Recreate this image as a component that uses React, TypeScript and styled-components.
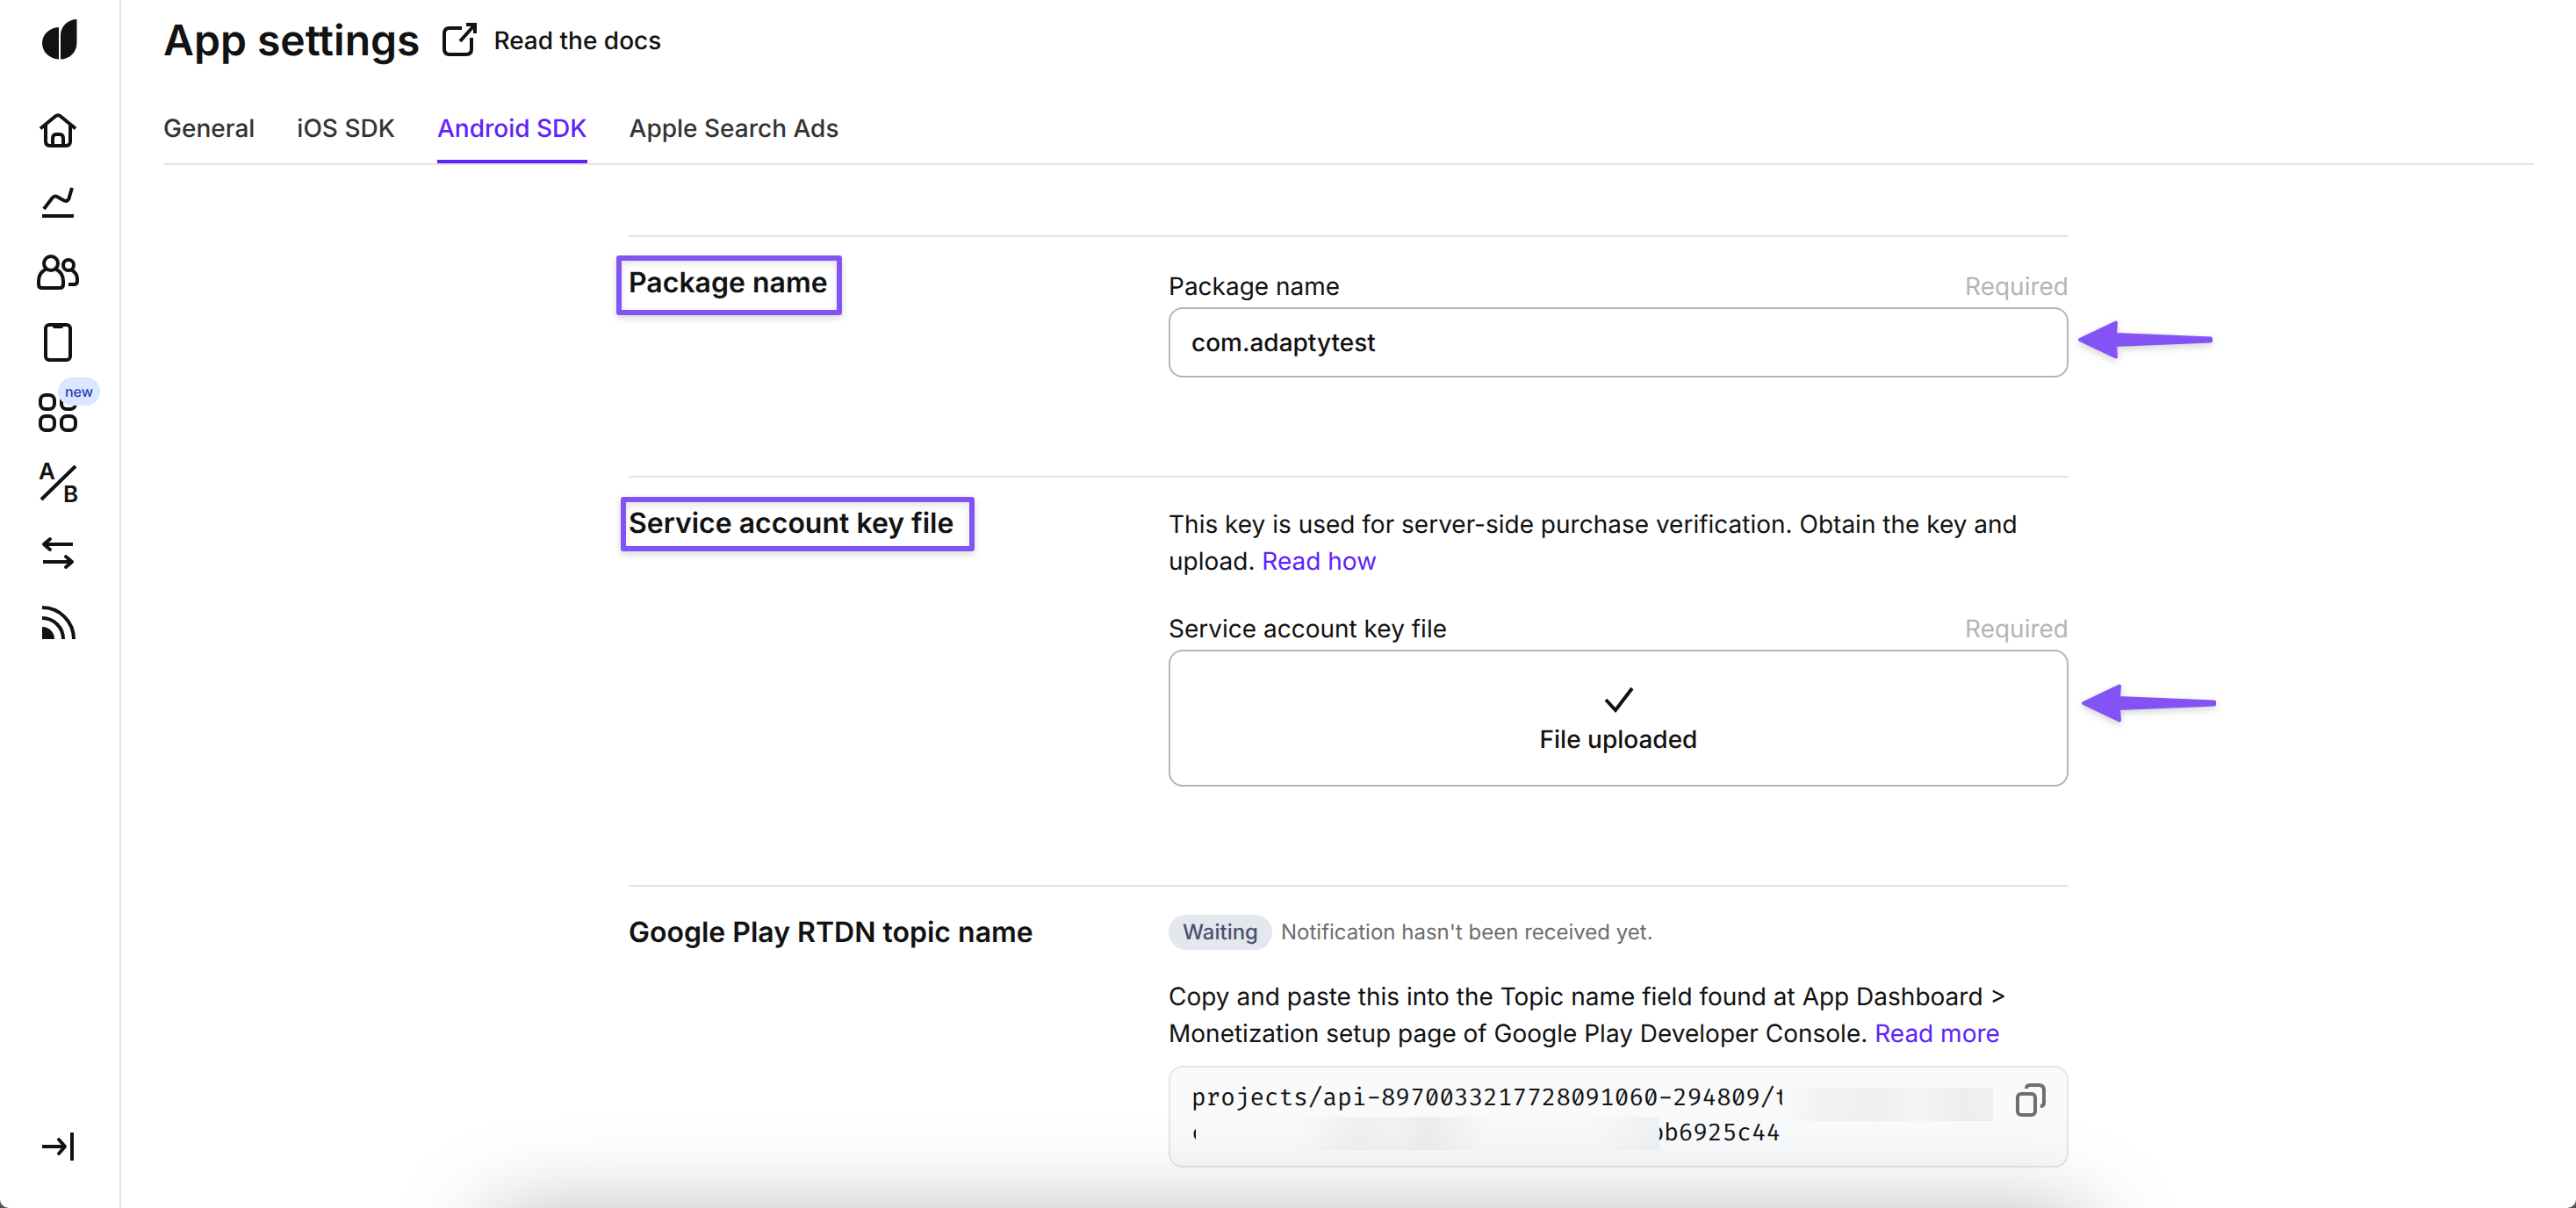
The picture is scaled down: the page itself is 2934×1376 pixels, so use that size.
import React from "react";
import styled, { createGlobalStyle, css } from "styled-components";

const ink = "#121212";
const violet = "#5f22fa";
const marker = "#8453f5";
const hairline = "#e4e4e4";
const outline = "#b5b5b5";

const GlobalStyle = createGlobalStyle`
  *, *::before, *::after { box-sizing: border-box; }
  html { background: #555; }
  body {
    margin: 0;
    color: ${ink};
    font-family: Inter, "Liberation Sans", sans-serif;
    font-size: 28px;
    line-height: 42px;
    text-rendering: geometricPrecision;
  }
  h1, h2, p { margin: 0; }
  button, input { font: inherit; color: inherit; text-rendering: inherit; }
  a { color: inherit; text-decoration: none; }
`;

const Shell = styled.div`
  position: relative;
  display: flex;
  min-height: 100vh;
  overflow: hidden;
  background: #fff;
  border-radius: 0 0 10px 10px;
`;

const Sidebar = styled.aside`
  display: flex;
  flex: none;
  flex-direction: column;
  justify-content: space-between;
  width: 138px;
  padding: 22px 0 46px 42px;
  border-right: 2px solid ${hairline};
`;

const SideNav = styled.nav`
  display: flex;
  flex-direction: column;
  gap: 32px;
  margin-top: 56px;
`;

const iconBox = css`
  position: relative;
  display: block;
  width: 48px;
  height: 48px;
`;

const SideLink = styled.a`
  ${iconBox}
`;

const SideButton = styled.button`
  ${iconBox}
  padding: 0;
  border: 0;
  background: none;
  cursor: pointer;
`;

const NewBadge = styled.span`
  position: absolute;
  top: -16px;
  left: 24px;
  width: 48px;
  border-radius: 16px;
  background: #dae8ff;
  color: #2540b8;
  font-size: 16px;
  font-weight: 500;
  line-height: 32px;
  text-align: center;
`;

const Icon = styled.svg`
  display: block;
  width: 48px;
  height: 48px;
  overflow: visible;
  fill: none;
  stroke: currentColor;
  stroke-width: 4px;
`;

const GlyphText = styled.text`
  fill: currentColor;
  stroke: none;
  font-size: 26px;
  font-weight: 600;
`;

const Main = styled.main`
  flex: 1;
  min-width: 0;
  padding: 18px 48px 46px;
`;

const Header = styled.header`
  display: flex;
  align-items: center;
  gap: 22px;
`;

const Title = styled.h1`
  font-size: 48px;
  font-weight: 600;
  line-height: 56px;
`;

const DocsLink = styled.a`
  display: flex;
  align-items: center;
  gap: 14px;
  font-weight: 500;
`;

const Tabs = styled.nav`
  display: flex;
  gap: 48px;
  margin-top: 52px;
  border-bottom: 2px solid ${hairline};
`;

const Tab = styled.a<{ $active?: boolean }>`
  padding-bottom: 16px;
  border-bottom: 4px solid ${(p) => (p.$active ? violet : "transparent")};
  color: ${(p) => (p.$active ? violet : "#333")};
  font-weight: 500;
  line-height: 40px;
`;

const Sections = styled.div`
  max-width: 1640px;
  margin: 80px auto 0;
`;

const Section = styled.section`
  display: grid;
  grid-template-columns: 3fr 5fr;
  padding: 32px 0 112px;
  border-top: 2px solid ${hairline};

  &:last-child {
    padding-bottom: 0;
  }
`;

const SectionTitle = styled.h2`
  position: relative;
  justify-self: start;
  align-self: start;
  font-size: 32px;
  font-weight: 600;
  line-height: 40px;
`;

const Highlight = styled.span<{ $inset: string }>`
  position: absolute;
  inset: ${(p) => p.$inset};
  border: 6px solid ${marker};
  border-radius: 3px;
  box-shadow: 0 3px 8px rgba(0, 0, 0, 0.16), inset 0 3px 8px rgba(0, 0, 0, 0.12);
  pointer-events: none;
`;

const Stack = styled.div`
  display: flex;
  flex-direction: column;
  gap: 32px;
  min-width: 0;
`;

const Field = styled.div`
  display: flex;
  flex-direction: column;
`;

const FieldHead = styled.div`
  display: flex;
  justify-content: space-between;
  padding: 4px 0;
  line-height: 40px;
`;

const Required = styled.span`
  color: ${outline};
`;

const Control = styled.div`
  position: relative;
`;

const TextInput = styled.input`
  display: block;
  width: 100%;
  height: 80px;
  padding: 0 24px;
  border: 2px solid ${outline};
  border-radius: 16px;
  background: #fff;
  font-weight: 500;
  outline: none;
`;

const Upload = styled.label`
  display: flex;
  flex-direction: column;
  align-items: center;
  padding: 30px;
  border: 2px solid ${outline};
  border-radius: 16px;
  font-weight: 500;
  line-height: 44px;
  cursor: pointer;
`;

const FileInput = styled.input`
  position: absolute;
  width: 1px;
  height: 1px;
  opacity: 0;
`;

const Pointer = styled.svg<{ $left: number; $top: number }>`
  position: absolute;
  top: ${(p) => p.$top}px;
  left: calc(100% + ${(p) => p.$left}px);
  width: 154px;
  height: 44px;
  overflow: visible;
  fill: ${marker};
  stroke: ${marker};
  stroke-width: 4px;
  stroke-linejoin: round;
  filter: drop-shadow(0 3px 4px rgba(0, 0, 0, 0.18));
  pointer-events: none;
`;

const TextLink = styled.a`
  color: ${violet};
`;

const Status = styled.div`
  display: flex;
  align-items: center;
  gap: 10px;
  color: #6b6b6b;
  font-size: 24px;
  line-height: 40px;
`;

const Badge = styled.span`
  padding: 0 16px;
  border-radius: 20px;
  background: #e4e7ed;
  color: #4c5270;
  font-weight: 500;
`;

const Topic = styled.div`
  display: flex;
  flex-direction: column;
  gap: 16px;
`;

const CodeBox = styled.div`
  display: flex;
  justify-content: space-between;
  padding: 16px 24px;
  border: 2px solid #e3e6eb;
  border-radius: 16px;
  background: #f9fafc;
`;

const Code = styled.code`
  min-width: 0;
  font-family: "Fira Code", "Liberation Mono", monospace;
  font-size: 27px;
  line-height: 40px;
  white-space: pre;
`;

const CodeLine = styled.span`
  display: flex;
  height: 40px;
`;

const Redacted = styled.span<{ $width: number; $start: number; $end: number; $drop: number; $tint: string }>`
  position: relative;
  flex: none;
  width: ${(p) => p.$width}px;
  height: 38px;
  margin: ${(p) => p.$drop}px ${(p) => -p.$end}px 0 ${(p) => -p.$start}px;
  background: ${(p) => p.$tint};
`;

const CopyButton = styled.button`
  flex: none;
  align-self: start;
  padding: 0;
  border: 0;
  background: none;
  color: #6f6f6f;
  cursor: pointer;
`;

const BottomShade = styled.div`
  position: absolute;
  right: 560px;
  bottom: -130px;
  left: 560px;
  height: 112px;
  border-radius: 20px;
  box-shadow: 0 0 110px rgba(0, 0, 0, 0.36);
  pointer-events: none;
`;

const PointerArrow = ({ left, top }: { left: number; top: number }) => (
  <Pointer $left={left} $top={top} viewBox="0 0 154 44" aria-hidden="true">
    <path d="M2 22 L43 2.500 L42 16 L151 20.500 V23.500 L42 28 L43 41.500 Z" />
  </Pointer>
);

const navItems = [
  {
    label: "Home",
    art: (
      <>
        <path d="M4 20.500 L21 6.500 Q24 4 27 6.500 L44 20.500" />
        <path d="M10 16 V35 Q10 40 15 40 H33 Q38 40 38 35 V16" />
        <path d="M18 40 V32 Q18 27 22 27 H26 Q30 27 30 32 V40" />
      </>
    ),
  },
  {
    label: "Charts",
    art: (
      <>
        <path d="M8 32 L17.500 19.500 Q20 16.500 23 18 L30 22 Q35 24.500 36.500 20 L40 8" />
        <path d="M6 40 H42" />
      </>
    ),
  },
  {
    label: "Profiles",
    art: (
      <>
        <circle cx="16" cy="14" r="8" />
        <path d="M10.500 20.500 C5.500 23 2 28 2 34 V38 Q2 42 6 42 H26 Q30 42 30 38 V34 C30 28 26.500 23 21.500 20.500" />
        <circle cx="36" cy="16" r="6" />
        <path d="M39.500 21.500 C44 24 46 28 46 32 V34 Q46 38 42 38 H36" />
      </>
    ),
  },
  {
    label: "Paywalls",
    art: (
      <>
        <rect x="10" y="4" width="28" height="40" rx="4" />
        <path d="M18 4 H30 V6 Q30 8 28 8 H20 Q18 8 18 6 Z" fill="currentColor" stroke="none" />
      </>
    ),
  },
  {
    label: "Placements",
    badge: "new",
    art: (
      <>
        <rect x="4" y="4" width="16" height="16" rx="6" />
        <rect x="28" y="4" width="16" height="16" rx="6" />
        <rect x="4" y="28" width="16" height="16" rx="6" />
        <rect x="28" y="28" width="16" height="16" rx="6" />
      </>
    ),
  },
  {
    label: "A/B tests",
    art: (
      <>
        <path d="M5 43 L44 5" />
        <GlyphText x="2" y="20">A</GlyphText>
        <GlyphText x="30" y="46">B</GlyphText>
      </>
    ),
  },
  {
    label: "Integrations",
    art: (
      <>
        <path d="M41 14 H8" />
        <path d="M15 8 L8 14 L15 20" strokeLinecap="round" strokeLinejoin="round" />
        <path d="M7 34 H40" />
        <path d="M33 28 L40 34 L33 40" strokeLinecap="round" strokeLinejoin="round" />
      </>
    ),
  },
  {
    label: "Event feed",
    art: (
      <>
        <path d="M6 28 A14 14 0 0 1 20 42 H6 Z" fill="currentColor" stroke="none" />
        <path d="M6 18 A24 24 0 0 1 30 42" />
        <path d="M6 6 A36 36 0 0 1 42 42" />
      </>
    ),
  },
];

const tabs = ["General", "iOS SDK", "Android SDK", "Apple Search Ads"];

export default function App() {
  return (
    <>
      <GlobalStyle />
      <Shell>
        <Sidebar>
          <div>
            <SideLink href="#" aria-label="Adapty">
              <Icon viewBox="0 0 48 48">
                <path
                  d="M25 9 V45.500 C14 45 6 37 6 27.300 C6 17.500 14 9.500 25 9 Z M45.500 0 V27 C45.500 37.500 37 45.500 27 45.500 V18 C27 8 35.500 0 45.500 0 Z"
                  fill="currentColor"
                  stroke="none"
                />
              </Icon>
            </SideLink>
            <SideNav>
              {navItems.map((item) => (
                <SideLink key={item.label} href="#" aria-label={item.label}>
                  <Icon viewBox="0 0 48 48">{item.art}</Icon>
                  {item.badge && <NewBadge>{item.badge}</NewBadge>}
                </SideLink>
              ))}
            </SideNav>
          </div>
          <SideButton type="button" aria-label="Expand menu">
            <Icon viewBox="0 0 48 48">
              <path d="M6 24 H32" />
              <path d="M25 16 L32 24 L25 32" strokeLinecap="round" strokeLinejoin="round" />
              <path d="M40 8 V40" />
            </Icon>
          </SideButton>
        </Sidebar>

        <Main>
          <Header>
            <Title>App settings</Title>
            <DocsLink href="#">
              <Icon viewBox="0 0 48 48">
                <path d="M26 10 H12 Q6 10 6 16 V34 Q6 40 12 40 H31 Q37 40 37 34 V21" />
                <path d="M24 25 L40 7" />
                <path d="M31 6 H41 V16" />
              </Icon>
              Read the docs
            </DocsLink>
          </Header>

          <Tabs>
            {tabs.map((name) => (
              <Tab key={name} href="#" $active={name === "Android SDK"}>
                {name}
              </Tab>
            ))}
          </Tabs>

          <Sections>
            <Section>
              <SectionTitle>
                Package name
                <Highlight $inset="-11px -16px -17px -14px" />
              </SectionTitle>
              <Field>
                <FieldHead>
                  <label htmlFor="package">Package name</label>
                  <Required>Required</Required>
                </FieldHead>
                <Control>
                  <TextInput id="package" type="text" defaultValue="com.adaptytest" />
                  <PointerArrow left={11} top={15} />
                </Control>
              </Field>
            </Section>

            <Section>
              <SectionTitle>
                Service account key file
                <Highlight $inset="-10px -24px -12px -9px" />
              </SectionTitle>
              <Stack>
                <p>
                  This key is used for server-side purchase verification. Obtain the key and upload.{" "}
                  <TextLink href="#">Read how</TextLink>
                </p>
                <Field>
                  <FieldHead>
                    <label htmlFor="keyfile">Service account key file</label>
                    <Required>Required</Required>
                  </FieldHead>
                  <Control>
                    <FileInput id="keyfile" type="file" />
                    <Upload htmlFor="keyfile">
                      <Icon viewBox="0 0 48 48">
                        <path d="M9 25 L20 37 L39 12" />
                      </Icon>
                      File uploaded
                    </Upload>
                    <PointerArrow left={15} top={39} />
                  </Control>
                </Field>
              </Stack>
            </Section>

            <Section>
              <SectionTitle>Google Play RTDN topic name</SectionTitle>
              <Stack>
                <Status>
                  <Badge>Waiting</Badge>
                  Notification hasn't been received yet.
                </Status>
                <Topic>
                  <p>
                    Copy and paste this into the Topic name field found at App Dashboard &gt; Monetization setup page
                    of Google Play Developer Console. <TextLink href="#">Read more</TextLink>
                  </p>
                  <CodeBox>
                    <Code>
                      <CodeLine>
                        projects/api-8970033217728091060-294809/t
                        <Redacted
                          $width={240}
                          $start={8}
                          $end={0}
                          $drop={7}
                          $tint="linear-gradient(90deg, #f9fafc, #f2f3f5 16%, #eeeff1 45%, #f4f5f7 65%, #edeef0 85%, #efeff2)"
                        />
                      </CodeLine>
                      <CodeLine>
                        c
                        <Redacted
                          $width={528}
                          $start={12}
                          $end={11}
                          $drop={0}
                          $tint="linear-gradient(90deg, #f9fafc 22%, #eff0f2 35%, #f2f3f5 43%, #ecedef 50%, #f8f9fb 63%, #f8f9fb 85%, #f0f1f3)"
                        />
                        bb6925c44
                      </CodeLine>
                    </Code>
                    <CopyButton type="button" aria-label="Copy topic name">
                      <Icon viewBox="0 0 48 48">
                        <rect x="16" y="14" width="20" height="24" rx="4" />
                        <path d="M26 8 Q26 4 30 4 H40 Q46 4 46 10 V24 Q46 28 42 28" />
                      </Icon>
                    </CopyButton>
                  </CodeBox>
                </Topic>
              </Stack>
            </Section>
          </Sections>
        </Main>
        <BottomShade />
      </Shell>
    </>
  );
}
